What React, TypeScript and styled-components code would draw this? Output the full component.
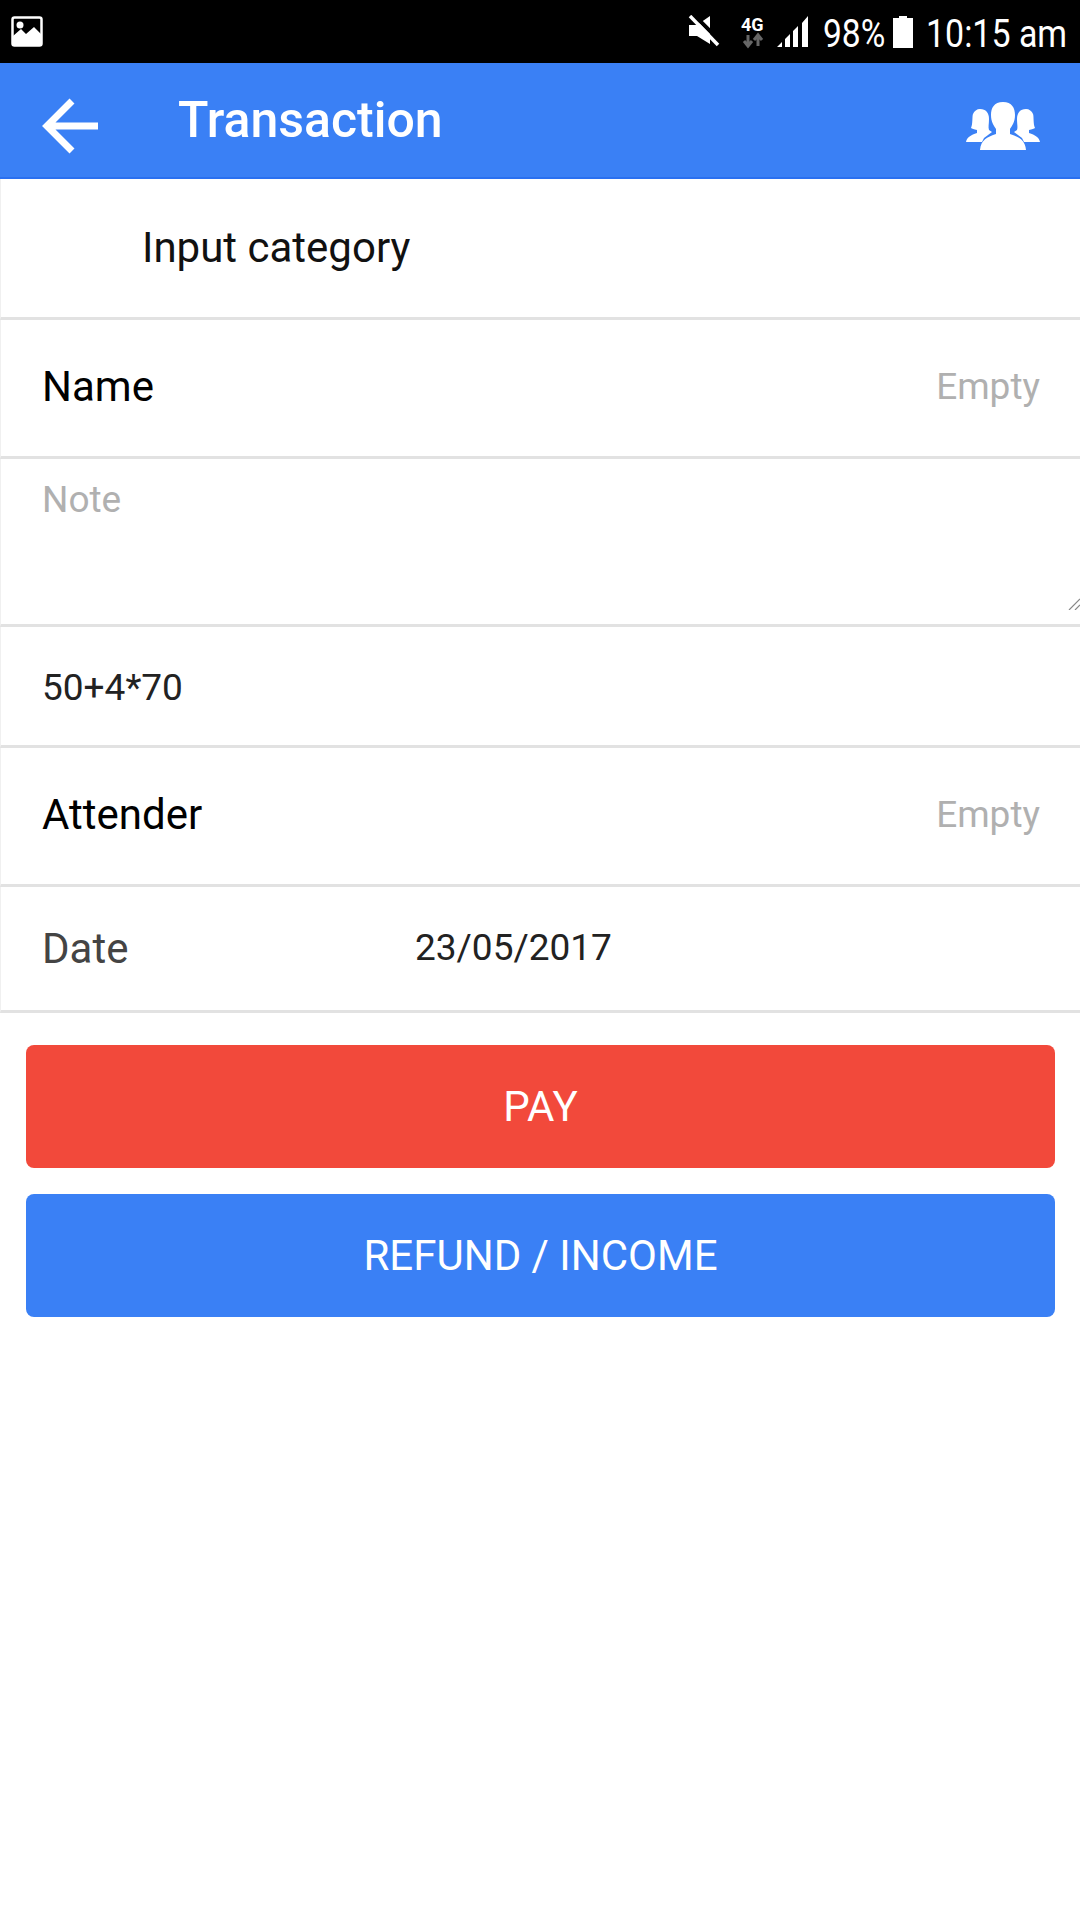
import React from "react";
import styled, { createGlobalStyle } from "styled-components";

const Global = createGlobalStyle`
  html, body { margin: 0; padding: 0; background: #fff; }
  body { font-family: Roboto, "Liberation Sans", sans-serif; }
`;

const Page = styled.div`
  width: 1080px;
  height: 1920px;
  background: #fff;
  overflow: hidden;
`;

const StatusBar = styled.div`
  height: 63px;
  background: #000;
  display: flex;
  align-items: center;
  padding: 0 14px 0 11px;
  color: #fff;
`;

const StatusIcons = styled.div`
  margin-left: auto;
  display: flex;
  align-items: center;
`;

const StatusText = styled.span<{ $ml: number; $w: number; $sx: number }>`
  display: inline-block;
  width: ${(p) => p.$w}px;
  margin: 6px 0 0 ${(p) => p.$ml}px;
  font-size: 39px;
  line-height: 57px;
  white-space: nowrap;
  color: #fff;
  transform: scaleX(${(p) => p.$sx});
  transform-origin: left center;
`;

const StatusIcon = styled.svg<{ $ml: number }>`
  display: block;
  margin-left: ${(p) => p.$ml}px;
`;

const Header = styled.header`
  height: 116px;
  box-sizing: border-box;
  background: #3a80f5;
  border-bottom: 2px solid #2a70f0;
  display: flex;
  align-items: center;
  padding: 0 40px;
`;

const BackButton = styled.div`
  width: 60px;
  height: 60px;
  margin-top: 12px;
  display: flex;
`;

const Title = styled.h1`
  margin: 0 0 0 78px;
  font-size: 50px;
  font-weight: 500;
  color: #fff;
`;

const GroupButton = styled.div`
  margin-left: auto;
  margin-top: 12px;
  display: flex;
`;

const Row = styled.div<{ $h: number; $pt?: number; $pb?: number }>`
  height: ${(p) => p.$h}px;
  box-sizing: border-box;
  border-bottom: 3px solid #e2e2e2;
  border-left: 1px solid #f0f0f0;
  display: flex;
  align-items: center;
  padding: ${(p) => p.$pt ?? 0}px 40px ${(p) => p.$pb ?? 0}px 41px;
`;

const CategoryText = styled.span`
  margin-left: 100px;
  font-size: 42px;
  color: #111;
`;

const Label = styled.span`
  font-size: 42px;
  color: #000;
`;

const Placeholder = styled.span`
  margin-left: auto;
  font-size: 37px;
  color: #b0b0b0;
`;

const NoteRow = styled.div`
  height: 168px;
  box-sizing: border-box;
  border-bottom: 3px solid #e2e2e2;
  border-left: 1px solid #f0f0f0;
  padding: 19px 0 0 41px;
  position: relative;
`;

const NoteText = styled.span`
  display: block;
  font-size: 37px;
  line-height: 43px;
  color: #b0b0b0;
`;

const ResizeGrip = styled.svg`
  position: absolute;
  right: 0;
  bottom: 14px;
`;

const Expression = styled.span`
  font-size: 37px;
  color: #222;
`;

const DateLabel = styled.span`
  font-size: 42px;
  color: #444;
  width: 373px;
`;

const DateValue = styled.span`
  font-size: 37px;
  color: #222;
  margin-bottom: 2px;
`;

const Actions = styled.div`
  display: flex;
  flex-direction: column;
  gap: 26px;
  padding: 32px 25px 0 26px;
`;

const ActionButton = styled.button<{ $bg: string }>`
  height: 123px;
  border: none;
  border-radius: 8px;
  background: ${(p) => p.$bg};
  color: #fff;
  font-family: Roboto, sans-serif;
  font-size: 42px;
  padding: 0;
`;

export default function App() {
  return (
    <Page>
      <Global />
      <StatusBar>
        <svg width="32" height="31" viewBox="0 0 32 31">
          <rect x="1.5" y="1.5" width="29" height="28" rx="2" fill="#000" stroke="#fff" strokeWidth="2.5" />
          <path d="M2 29 V20 L10 13 L15 18 L23 11 L30 18 V29 Z" fill="#fff" />
          <circle cx="9" cy="9" r="3.5" fill="#fff" />
        </svg>
        <StatusIcons>
          <StatusIcon $ml={0} width="32" height="34" viewBox="0 0 32 34">
            <path d="M1 10 H9 L22 1 V29 L9 21 H1 Z" fill="#fff" />
            <path d="M5 -1 L33 27" stroke="#000" strokeWidth="4" />
            <path d="M2 1 L30 30" stroke="#fff" strokeWidth="3.5" />
          </StatusIcon>
          <StatusIcon $ml={21} width="28" height="34" viewBox="0 0 28 34">
            <text x="0" y="16" fontFamily="Roboto, sans-serif" fontWeight="700" fontSize="18" fill="#fff">4G</text>
            <path d="M7 20 V29 M3 26 L7 31 L11 26" stroke="#666" strokeWidth="3" fill="none" />
            <path d="M17 31 V22 M13 25 L17 20 L21 25" stroke="#666" strokeWidth="3" fill="none" />
          </StatusIcon>
          <StatusIcon $ml={8} width="33" height="33" viewBox="0 0 33 33">
            <path d="M0 32 L5 27 V32 Z M8 32 V24 L13 19 V32 Z M16 32 V16 L21 11 V32 Z M25 32 V8 L31 1 V32 Z" fill="#fff" />
          </StatusIcon>
          <StatusText $ml={13} $w={60} $sx={0.86}>98%</StatusText>
          <StatusIcon $ml={10} width="20" height="32" viewBox="0 0 20 32">
            <path d="M6 0 H14 V2 H20 V32 H0 V2 H6 Z" fill="#fff" />
          </StatusIcon>
          <StatusText $ml={13} $w={140} $sx={0.87}>10:15 am</StatusText>
        </StatusIcons>
      </StatusBar>
      <Header>
        <BackButton>
          <svg width="60" height="60" viewBox="0 0 60 60">
            <path d="M58 30 H7 M32 5 L7 30 L32 55" stroke="#fff" strokeWidth="7" fill="none" />
          </svg>
        </BackButton>
        <Title>Transaction</Title>
        <GroupButton>
          <svg width="74" height="48" viewBox="0 0 74 48">
            <path d="M14 7 C20 7 23 11 23 17 C23 22 22 25 23 28 L26 30 L18 36 L16 40 H0 C1 35 5 33 11 31 V28 C8 27 6 27 5 26 C7 22 6 14 7 12 C8 9 11 7 14 7 Z" fill="#fff" />
            <path d="M60 7 C54 7 51 11 51 17 C51 22 52 25 51 28 L48 30 L56 36 L58 40 H74 C73 35 69 33 63 31 V28 C66 27 68 27 69 26 C67 22 68 14 67 12 C66 9 63 7 60 7 Z" fill="#fff" />
            <path d="M37 0 C46 0 49 6 49 13 C49 20 46 24 44 27 V32 C52 35 59 37 60 48 H14 C15 37 22 35 30 32 V27 C28 24 25 20 25 13 C25 6 28 0 37 0 Z" fill="#fff" />
          </svg>
        </GroupButton>
      </Header>
      <Row $h={141} $pb={2}>
        <CategoryText>Input category</CategoryText>
      </Row>
      <Row $h={139} $pb={3}>
        <Label>Name</Label>
        <Placeholder>Empty</Placeholder>
      </Row>
      <NoteRow>
        <NoteText>Note</NoteText>
        <ResizeGrip width="12" height="12" viewBox="0 0 12 12">
          <path d="M1 12 L12 1 M7 12 L12 7" stroke="#888" strokeWidth="1.2" />
        </ResizeGrip>
      </NoteRow>
      <Row $h={121} $pt={2}>
        <Expression>50+4*70</Expression>
      </Row>
      <Row $h={139} $pb={3}>
        <Label>Attender</Label>
        <Placeholder>Empty</Placeholder>
      </Row>
      <Row $h={126}>
        <DateLabel>Date</DateLabel>
        <DateValue>23/05/2017</DateValue>
      </Row>
      <Actions>
        <ActionButton $bg="#f2493b">PAY</ActionButton>
        <ActionButton $bg="#3a80f5">REFUND / INCOME</ActionButton>
      </Actions>
    </Page>
  );
}
